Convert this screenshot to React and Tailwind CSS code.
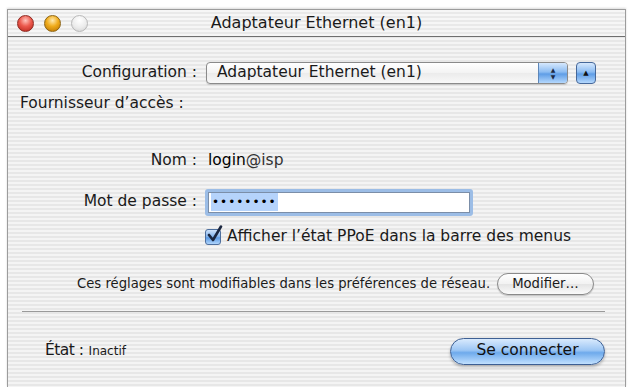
import React from 'react';

const stripes =
  'bg-[repeating-linear-gradient(to_bottom,#f4f4f4_0px,#f4f4f4_2px,#e7e7e7_2px,#e7e7e7_4px)]';

const Light = ({ color }) => {
  const styles = {
    red: 'bg-[radial-gradient(circle_at_50%_30%,#ffc4bc_0%,#ec5a4e_45%,#b52218_100%)] border-[#8e2a22]',
    orange: 'bg-[radial-gradient(circle_at_50%_30%,#ffeab0_0%,#f0ac1c_45%,#b77000_100%)] border-[#8d6412]',
    gray: 'bg-[radial-gradient(circle_at_50%_30%,#ffffff_0%,#ececec_55%,#cfcfcf_100%)] border-[#b8b8b8]',
  };
  return <div className={`h-[17px] w-[17px] rounded-full border ${styles[color]}`} />;
};

const Label = ({ children }) => (
  <div className="w-[190px] shrink-0 pr-[1px] text-right">{children}</div>
);

export default function App() {
  return (
    <div
      className="h-[387px] w-[632px] overflow-hidden bg-white pl-[7px] pr-[6px] pt-[9px] text-[15.5px] text-[#1a1a1a]"
      style={{ fontFamily: '"DejaVu Sans", "Open Sans", sans-serif' }}
    >
      <div className={`flex h-full flex-col border-x border-t border-[#9c9c9c] ${stripes} shadow-[0_-1px_2px_rgba(0,0,0,0.15)]`}>
        {/* title bar */}
        <div className="relative flex h-[27px] shrink-0 items-center border-b border-[#6f6f6f] bg-[repeating-linear-gradient(to_bottom,#f6f6f6_0px,#f6f6f6_2px,#e9e9e9_2px,#e9e9e9_4px)]">
          <div className="flex items-center gap-[10px] pl-[9px]">
            <Light color="red" />
            <Light color="orange" />
            <Light color="gray" />
          </div>
          <div className="absolute inset-0 flex items-center justify-center text-[16px] text-[#1a1a1a]">
            Adaptateur Ethernet (en1)
          </div>
        </div>

        {/* Configuration row */}
        <div className="mt-[25px] flex h-[22px] items-center">
          <Label>Configuration :</Label>
          <div className="ml-[8px] flex h-[22px] w-[362px] items-stretch overflow-hidden rounded-[4px] border border-[#8a8a8a] bg-[linear-gradient(#ffffff,#f3f3f3_50%,#ebebeb_50%,#f8f8f8)] shadow-[0_1px_1px_rgba(0,0,0,0.15)]">
            <div className="flex flex-1 items-center pl-[10px]">Adaptateur Ethernet (en1)</div>
            <div className="flex w-[29px] flex-col items-center justify-center border-l border-[#5d86b8] bg-[linear-gradient(#d6e8fd,#8cbcf2_45%,#5f9de6_55%,#b4d8fd)] text-[6px] leading-[7px] text-[#1c2a44]">
              <span>▲</span>
              <span>▼</span>
            </div>
          </div>
          <div className="ml-[8px] flex h-[22px] w-[20px] items-center justify-center rounded-[4px] border border-[#46689a] bg-[linear-gradient(#d6e8fd,#8cbcf2_45%,#5f9de6_55%,#b4d8fd)] text-[7px] text-[#111]">
            ▲
          </div>
        </div>

        {/* Fournisseur */}
        <div className="mt-[10px] flex h-[20px] items-center pl-[12px]">Fournisseur d’accès :</div>

        {/* Nom */}
        <div className="mt-[37px] flex h-[20px] items-center">
          <Label>Nom :</Label>
          <div className="ml-[10px]">
            <span className="text-black">login</span>
            <span className="text-[#333]">@isp</span>
          </div>
        </div>

        {/* Mot de passe */}
        <div className="mt-[17px] flex h-[28px] items-center">
          <Label>Mot de passe :</Label>
          <div className="ml-[7px] h-[27px] w-[268px] rounded-[3px] bg-[#9cbde6] p-[3px]">
            <div className="flex h-full items-center border border-[#7b8ea8] bg-white pl-[2px]">
              <span className="bg-[#b5d3fb] px-[1px] text-[12px] leading-[18px] tracking-[1px] text-black">••••••••</span>
            </div>
          </div>
        </div>

        {/* checkbox */}
        <div className="mt-[11px] flex h-[20px] items-center pl-[197px]">
          <div className="relative h-[16px] w-[16px] rounded-[3px] border border-[#4e6f9d] bg-[linear-gradient(#cfe3fb,#7fb1ec_50%,#5c9ae3_55%,#b0d5fc)]">
            <svg className="absolute -top-[5px] left-[1px]" width="16" height="18" viewBox="0 0 16 18">
              <path d="M2 10 L6 15 L14 1.5" fill="none" stroke="#1b2740" strokeWidth="2.6" strokeLinecap="round" strokeLinejoin="round" />
            </svg>
          </div>
          <span className="ml-[6px]">Afficher l’état PPoE dans la barre des menus</span>
        </div>

        {/* Ces réglages */}
        <div className="mt-[26px] flex h-[22px] items-center pl-[69px] text-[13.2px]">
          <span>Ces réglages sont modifiables dans les préférences de réseau.</span>
          <button className="ml-[7px] flex h-[22px] items-center rounded-full border border-[#8a8a8a] bg-[linear-gradient(#ffffff,#f2f2f2_50%,#e4e4e4_50%,#fafafa)] px-[14px] text-[13.2px] text-[#1a1a1a] shadow-[0_1px_1px_rgba(0,0,0,0.2)]">
            Modifier…
          </button>
        </div>

        {/* separator */}
        <div className="ml-[14px] mr-[20px] mt-[16px] h-[2px] border-t border-[#9a9a9a] border-b-white" />

        {/* bottom row */}
        <div className="mt-[24px] flex h-[28px] items-center justify-between pl-[37px] pr-[20px]">
          <div className="flex items-center">
            <span className="tracking-[-0.5px]">État :</span>
            <span className="ml-[5px] text-[12px]">Inactif</span>
          </div>
          <button className="flex h-[27px] w-[155px] items-center justify-center rounded-full border border-[#3d5f93] bg-[linear-gradient(#d9eafd,#9cc6f4_45%,#6eaaec_55%,#c1e0fe)] text-[15.5px] text-[#111] shadow-[0_2px_3px_rgba(0,0,0,0.25)]">
            Se connecter
          </button>
        </div>
      </div>
    </div>
  );
}
